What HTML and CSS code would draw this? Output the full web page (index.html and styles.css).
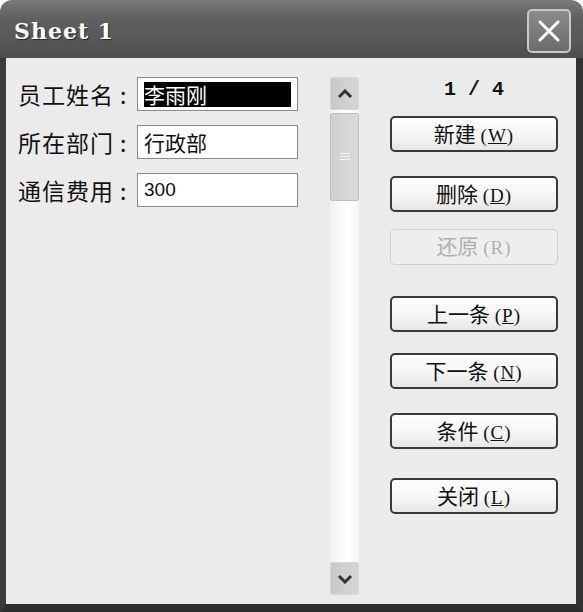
FILE: index.html
```html
<!DOCTYPE html>
<html lang="zh-CN">
<head>
    <meta charset="UTF-8">
    <title>Sheet1</title>
    <link rel="stylesheet" href="styles.css">
</head>
<body>
    <div class="window">
        <div class="titlebar">
            <span class="title">Sheet 1</span>
            <div class="close-btn">
                <svg width="26" height="26" viewBox="0 0 26 26">
                    <path d="M4 4 L22 22 M22 4 L4 22" stroke="#fff" stroke-width="3" stroke-linecap="round"/>
                </svg>
            </div>
        </div>

        <div class="client">
            <!-- record fields -->
            <div class="fields">
                <div class="row">
                    <span class="label">员工姓名<span class="colon">:</span></span>
                    <div class="box"><span class="selected">李雨刚</span></div>
                </div>
                <div class="row">
                    <span class="label">所在部门<span class="colon">:</span></span>
                    <div class="box">行政部</div>
                </div>
                <div class="row">
                    <span class="label">通信费用<span class="colon">:</span></span>
                    <div class="box num">300</div>
                </div>
            </div>

            <!-- record scrollbar -->
            <div class="scrollbar">
                <div class="arrow">
                    <svg width="16" height="10" viewBox="0 0 16 10"><path d="M2 8 L8 2 L14 8" fill="none" stroke="#333" stroke-width="3"/></svg>
                </div>
                <div class="thumb">
                    <span class="grip"></span>
                </div>
                <div class="track"></div>
                <div class="arrow">
                    <svg width="16" height="10" viewBox="0 0 16 10"><path d="M2 2 L8 8 L14 2" fill="none" stroke="#333" stroke-width="3"/></svg>
                </div>
            </div>

            <!-- actions -->
            <div class="actions">
                <div class="counter">1 / 4</div>
                <div class="btn">新建 <span class="key">(<u>W</u>)</span></div>
                <div class="btn">删除 <span class="key">(<u>D</u>)</span></div>
                <div class="btn disabled">还原 <span class="key">(R)</span></div>
                <div class="btn">上一条 <span class="key">(<u>P</u>)</span></div>
                <div class="btn">下一条 <span class="key">(<u>N</u>)</span></div>
                <div class="btn">条件 <span class="key">(<u>C</u>)</span></div>
                <div class="btn">关闭 <span class="key">(<u>L</u>)</span></div>
            </div>
        </div>
    </div>
</body>
</html>
```

FILE: styles.css
```css
body {
    margin: 0;
    background-color: #fff;
    font-family: "Noto Sans CJK SC", "Liberation Sans", sans-serif;
    color: #111;
}

.window {
    width: 583px;
    height: 612px;
    display: flex;
    flex-direction: column;
    box-sizing: border-box;
}

.titlebar {
    height: 58px;
    flex: none;
    display: flex;
    align-items: center;
    justify-content: space-between;
    padding: 0 12px 0 14px;
    background: linear-gradient(180deg, #7a7a7a 0%, #616161 30%, #575757 70%, #4e4e4e 100%);
    border-radius: 12px 12px 0 0;
}

.title {
    font-family: "DejaVu Serif", "Liberation Serif", serif;
    font-weight: bold;
    font-size: 22px;
    color: #fff;
    letter-spacing: 1px;
    text-shadow: 1px 1px 1px #222;
    padding-top: 4px;
}

.close-btn {
    width: 40px;
    height: 40px;
    margin-top: 4px;
    border: 2px solid #c8c8c8;
    border-radius: 5px;
    background: linear-gradient(180deg, #8c8c8c, #6c6c6c);
    display: flex;
    align-items: center;
    justify-content: center;
}

/* client area */
.client {
    flex: 1;
    display: flex;
    background-color: #ebebeb;
    border-left: 6px solid #3b3b3b;
    border-right: 7px solid #333;
    border-bottom: 8px solid #2e2e2e;
}

.fields {
    width: 294px;
    padding: 19px 0 0 12px;
    flex: none;
}

.row {
    display: flex;
    align-items: center;
    height: 34px;
    margin-bottom: 14px;
}

.label {
    width: 119px;
    font-size: 23px;
    letter-spacing: 1px;
    flex: none;
}

.colon {
    margin-left: 6px;
}

.box {
    width: 161px;
    height: 34px;
    box-sizing: border-box;
    border: 1px solid #8a8a8a;
    background-color: #fff;
    padding: 3px 6px;
    font-size: 21px;
    line-height: 26px;
    display: flex;
    align-items: center;
}

.box.num {
    font-family: "Liberation Sans", sans-serif;
    font-size: 19px;
}

.selected {
    flex: 1;
    height: 25px;
    line-height: 25px;
    background-color: #000;
    color: #fff;
}

/* scrollbar */
.scrollbar {
    width: 29px;
    margin: 19px 0 9px 18px;
    display: flex;
    flex-direction: column;
    background: linear-gradient(90deg, #f2f2f2, #fff 60%, #f6f6f6);
}

.arrow {
    height: 33px;
    flex: none;
    box-sizing: border-box;
    border: 1px solid #d8d8d8;
    border-radius: 2px;
    background: linear-gradient(90deg, #c9c9c9, #d6d6d6);
    display: flex;
    align-items: center;
    justify-content: center;
}

.thumb {
    height: 88px;
    margin-top: 3px;
    box-sizing: border-box;
    border: 1px solid #bdbdbd;
    border-radius: 2px;
    background: linear-gradient(90deg, #d0d0d0, #dadada);
    display: flex;
    align-items: center;
    justify-content: center;
}

.grip {
    width: 10px;
    height: 9px;
    background: repeating-linear-gradient(180deg, #f4f4f4 0 1px, transparent 1px 3px);
}

.track {
    flex: 1;
}

/* buttons */
.actions {
    width: 168px;
    margin-left: 31px;
    padding-top: 18px;
    display: flex;
    flex-direction: column;
}

.counter {
    font-family: "Liberation Mono", monospace;
    font-weight: bold;
    font-size: 20px;
    text-align: center;
    height: 40px;
    line-height: 28px;
}

.btn {
    height: 36px;
    box-sizing: border-box;
    border: 2px solid #3a3a3a;
    border-radius: 5px;
    background: linear-gradient(180deg, #fff, #f4f4f4 60%, #e6e6e6);
    font-size: 21px;
    line-height: 30px;
    text-align: center;
    color: #111;
}

.btn .key {
    font-family: "Liberation Serif", serif;
    font-size: 19px;
    letter-spacing: 1px;
}

.btn.disabled {
    border: 1px solid #d0d0d0;
    background: #eee;
    color: #b0b0b0;
}

.btn:nth-child(3) { margin-top: 24px; }
.btn:nth-child(4) { margin-top: 17px; }
.btn:nth-child(5) { margin-top: 31px; }
.btn:nth-child(6) { margin-top: 21px; }
.btn:nth-child(7) { margin-top: 24px; }
.btn:nth-child(8) { margin-top: 29px; }
```
